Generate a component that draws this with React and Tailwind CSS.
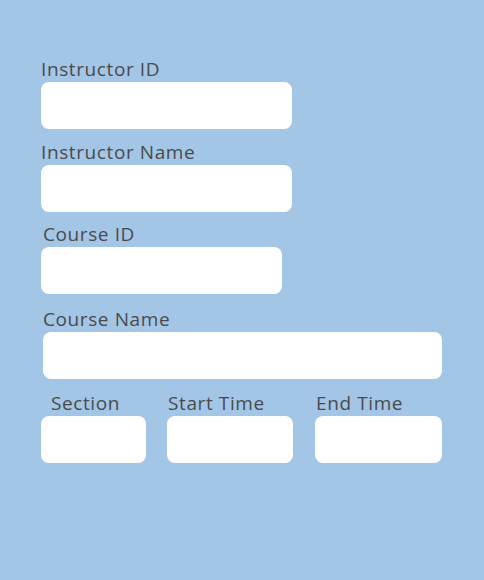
import React from "react";

function Field({ label, className = "", labelClass = "", boxClass = "" }) {
  return (
    <div className={`flex flex-col ${className}`}>
      <label
        className={`h-[26px] text-[19px] leading-[26px] tracking-[0.6px] text-[#4a4a4c] ${labelClass}`}
      >
        {label}
      </label>
      <input
        type="text"
        className={`h-[47px] rounded-[8px] bg-white outline-none ${boxClass}`}
      />
    </div>
  );
}

export default function App() {
  return (
    <div
      className="w-[484px] h-[580px] bg-[#a3c6e6] pl-[41px] pt-[56px]"
      style={{ fontFamily: "'Open Sans', 'Liberation Sans', sans-serif" }}
    >
      <div className="flex flex-col">
        <Field label="Instructor ID" boxClass="w-[251px]" />
        <Field label="Instructor Name" className="mt-[10px]" boxClass="w-[251px]" />
        <Field label="Course ID" className="mt-[9px]" labelClass="pl-[2px]" boxClass="w-[241px]" />
        <Field
          label="Course Name"
          className="mt-[12px]"
          labelClass="pl-[2px]"
          boxClass="w-[399px] ml-[2px]"
        />
        <div className="flex mt-[11px]">
          <Field label="Section" labelClass="pl-[10px]" boxClass="w-[105px]" />
          <Field label="Start Time" className="ml-[21px]" labelClass="pl-[1px]" boxClass="w-[126px]" />
          <Field label="End Time" className="ml-[22px]" labelClass="pl-[1px]" boxClass="w-[127px]" />
        </div>
      </div>
    </div>
  );
}
